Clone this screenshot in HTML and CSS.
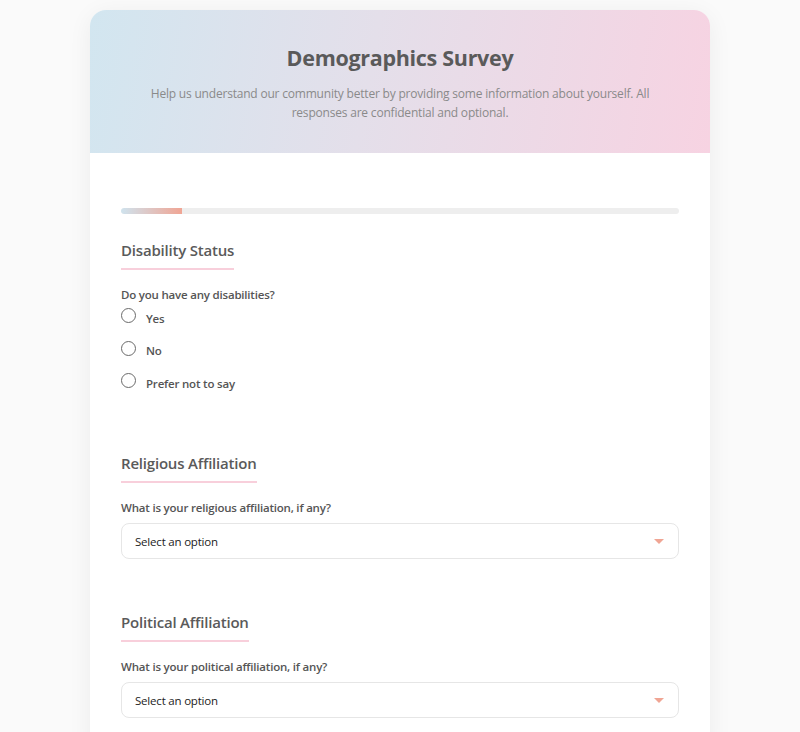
FILE: index.html
```html
<!DOCTYPE html>
<html lang="en">
<head>
<meta charset="utf-8">
<title>Demographics Survey</title>
<link rel="stylesheet" href="styles.css">
</head>
<body>
<div class="card">
  <header class="card-header">
    <h1 class="title">Demographics Survey</h1>
    <p class="subtitle">Help us understand our community better by providing some information about yourself. All responses are confidential and optional.</p>
  </header>
  <div class="card-body">
    <div class="progress"><div class="progress-fill" style="width: 11%"></div></div>

    <section class="section">
      <h2 class="section-title">Disability Status</h2>
      <div class="question">Do you have any disabilities?</div>
      <div class="radio-list">
        <label class="radio"><span class="radio-circle"></span><span class="radio-label">Yes</span></label>
        <label class="radio"><span class="radio-circle"></span><span class="radio-label">No</span></label>
        <label class="radio"><span class="radio-circle"></span><span class="radio-label">Prefer not to say</span></label>
      </div>
    </section>

    <section class="section">
      <h2 class="section-title">Religious Affiliation</h2>
      <div class="question">What is your religious affiliation, if any?</div>
      <div class="select"><span>Select an option</span><span class="caret"></span></div>
    </section>

    <section class="section">
      <h2 class="section-title">Political Affiliation</h2>
      <div class="question">What is your political affiliation, if any?</div>
      <div class="select"><span>Select an option</span><span class="caret"></span></div>
    </section>
  </div>
</div>
</body>
</html>
```
FILE: styles.css
```css
* { box-sizing: border-box; }
html, body { margin: 0; padding: 0; }
body {
  background: #fafafa;
  font-family: "Open Sans", "Noto Sans", sans-serif;
  color: #555;
  padding-top: 10px;
  height: 732px;
  overflow: hidden;
}
.card {
  width: 620px;
  margin: 0 auto;
  background: #fff;
  border-radius: 16px;
  box-shadow: 0 4px 24px rgba(0,0,0,0.06);
  overflow: hidden;
}
.card-header {
  background: linear-gradient(100deg, #d2e6f0 0%, #e4dfea 45%, #f7d3e2 100%);
  padding: 32px 45px 30px;
  text-align: center;
  height: 143px;
}
.title {
  margin: 0;
  font-size: 21.5px;
  font-weight: 700;
  color: #5a5a5a;
  line-height: 32px;
  letter-spacing: -0.3px;
}
.subtitle {
  margin: 10px 0 0;
  font-size: 12px;
  line-height: 19px;
  letter-spacing: -0.2px;
  color: #8a8a8a;
}
.card-body {
  padding: 55px 31px 40px;
}
.progress {
  height: 6px;
  background: #eeeeee;
  border-radius: 3px;
  overflow: hidden;
}
.progress-fill {
  height: 100%;
  background: linear-gradient(90deg, #cfe3ee, #f0a594);
  border-radius: 3px 0 0 3px;
}
.section { margin-top: 25px; }
.section + .section { margin-top: 52px; }
.section-title {
  display: inline-block;
  margin: 0;
  font-size: 15px;
  font-weight: 600;
  letter-spacing: -0.2px;
  color: #5a5a5a;
  line-height: 22px;
  padding-bottom: 7px;
  border-bottom: 2px solid #f8cfdb;
}
.question {
  margin-top: 16px;
  font-size: 11.5px;
  font-weight: 600;
  letter-spacing: -0.2px;
  color: #555;
  line-height: 18px;
}
.radio-list {
  display: flex;
  flex-direction: column;
  gap: 12.5px;
  margin-top: 4px;
  padding-bottom: 7px;
}
.radio {
  display: flex;
  align-items: center;
  height: 20px;
}
.radio-circle {
  width: 15px;
  height: 15px;
  border: 1px solid #6a6a6a;
  border-radius: 50%;
  background: #fff;
  margin-top: -5px;
}
.radio-label {
  margin-left: 10px;
  font-size: 11.5px;
  font-weight: 600;
  letter-spacing: -0.2px;
  color: #555;
}
.select {
  margin-top: 6px;
  height: 36px;
  border: 1px solid #e6e6e6;
  border-radius: 8px;
  display: flex;
  align-items: center;
  justify-content: space-between;
  padding: 0 14px 0 13px;
  font-size: 11.5px;
  letter-spacing: -0.2px;
  color: #222;
}
.caret {
  width: 0;
  height: 0;
  border-left: 5px solid transparent;
  border-right: 5px solid transparent;
  border-top: 5px solid #f0a594;
}
```
